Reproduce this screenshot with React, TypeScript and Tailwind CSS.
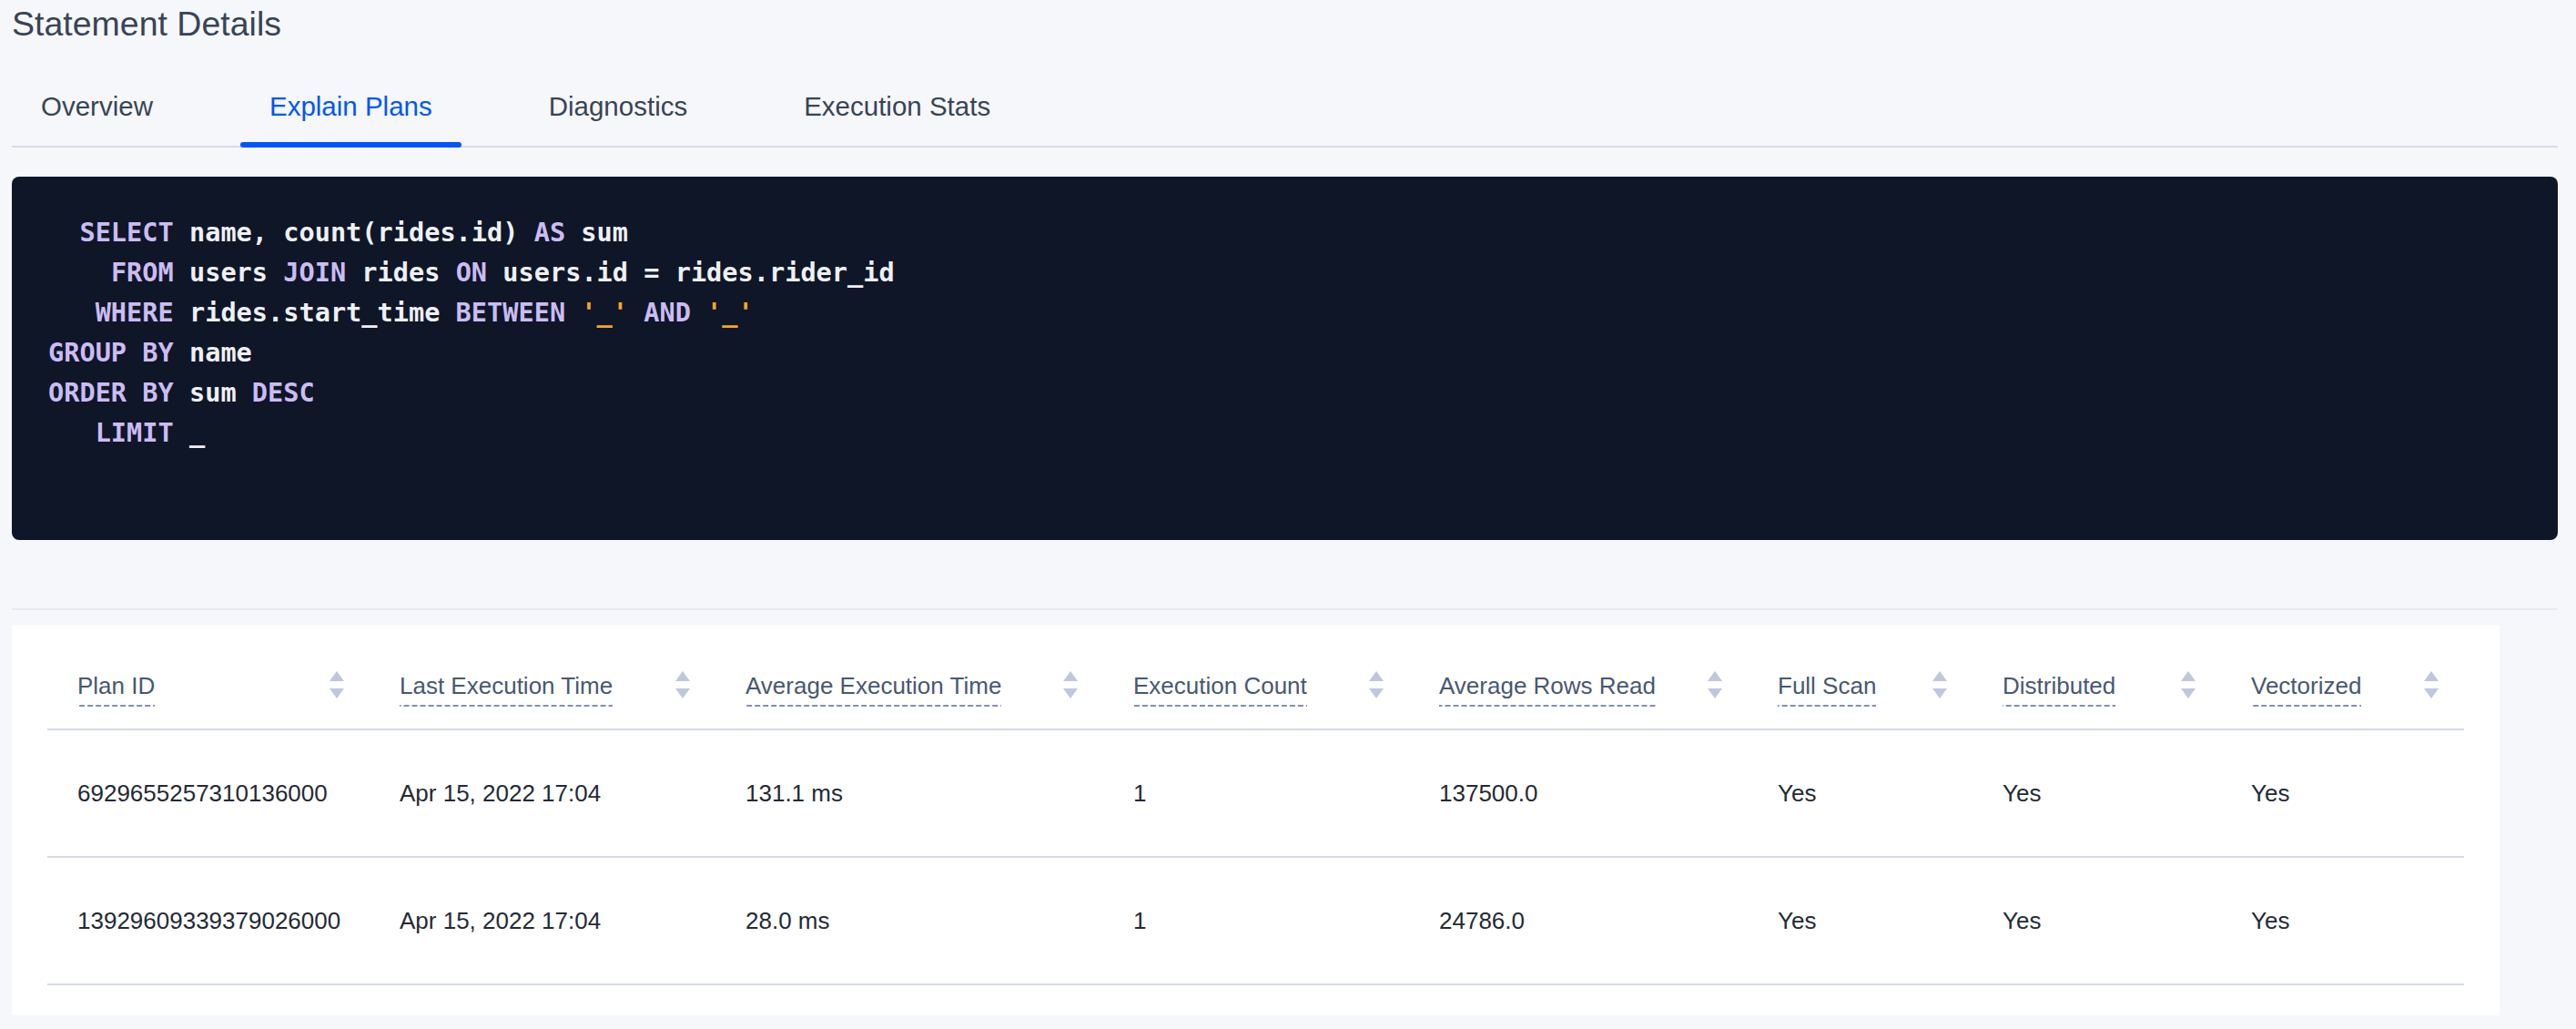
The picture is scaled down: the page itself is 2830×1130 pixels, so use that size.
import React from 'react';

const tabs = ['Overview', 'Explain Plans', 'Diagnostics', 'Execution Stats'];

const columns = [
  'Plan ID',
  'Last Execution Time',
  'Average Execution Time',
  'Execution Count',
  'Average Rows Read',
  'Full Scan',
  'Distributed',
  'Vectorized',
];

const rows = [
  ['6929655257310136000', 'Apr 15, 2022 17:04', '131.1 ms', '1', '137500.0', 'Yes', 'Yes', 'Yes'],
  ['13929609339379026000', 'Apr 15, 2022 17:04', '28.0 ms', '1', '24786.0', 'Yes', 'Yes', 'Yes'],
];

type Tok = { t: string; k?: 'kw' | 'str' };

// statement split into tokens so keywords and literals get their colours
const sql: Tok[][] = [
  [{ t: '  ' }, { t: 'SELECT', k: 'kw' }, { t: ' name, count(rides.id) ' }, { t: 'AS', k: 'kw' }, { t: ' sum' }],
  [
    { t: '    ' },
    { t: 'FROM', k: 'kw' },
    { t: ' users ' },
    { t: 'JOIN', k: 'kw' },
    { t: ' rides ' },
    { t: 'ON', k: 'kw' },
    { t: ' users.id = rides.rider_id' },
  ],
  [
    { t: '   ' },
    { t: 'WHERE', k: 'kw' },
    { t: ' rides.start_time ' },
    { t: 'BETWEEN', k: 'kw' },
    { t: ' ' },
    { t: "'_'", k: 'str' },
    { t: ' ' },
    { t: 'AND', k: 'kw' },
    { t: ' ' },
    { t: "'_'", k: 'str' },
  ],
  [{ t: 'GROUP BY', k: 'kw' }, { t: ' name' }],
  [{ t: 'ORDER BY', k: 'kw' }, { t: ' sum ' }, { t: 'DESC', k: 'kw' }],
  [{ t: '   ' }, { t: 'LIMIT', k: 'kw' }, { t: ' _' }],
];

function SortIcon() {
  return (
    <svg width="16" height="30" viewBox="0 0 16 30" className="mt-px shrink-0">
      <polygon points="8,0 16,11 0,11" fill="#c0c6dc" />
      <polygon points="0,19 16,19 8,30" fill="#c0c6dc" />
    </svg>
  );
}

const grid =
  'grid grid-cols-[354px_380px_426px_336px_372px_247px_273px_1fr]';

export default function App() {
  return (
    <div className="min-h-screen bg-[#f5f7fa] pl-[13px] pr-[20px] font-['Liberation_Sans',Arial,sans-serif]">
      <h1 className="text-[37.5px] leading-[52px] text-[#394455]">Statement Details</h1>

      <div className="flex gap-[64px] border-b-2 border-[#d6dbe7]">
        {tabs.map((tab, i) => (
          <div
            key={tab}
            className={`relative px-[32px] pt-[45px] pb-[23px] text-[29.5px] leading-[40px] ${
              i === 1 ? 'text-[#0055ff]' : 'text-[#394455]'
            }`}
          >
            {tab}
            {i === 1 && (
              <span className="absolute left-0 right-0 bottom-[-2px] h-[6px] rounded-full bg-[#0055ff]" />
            )}
          </div>
        ))}
      </div>

      <div className="mt-[32px] h-[399px] rounded-[8px] bg-[#0e1628] pl-[40px] pt-[39px]">
        <pre className="font-['DejaVu_Sans_Mono',monospace] text-[28.6px] leading-[44px] font-bold text-[#eef0f5]">
          {sql.map((line, i) => (
            <div key={i}>
              {line.map((tok, j) => (
                <span
                  key={j}
                  className={
                    tok.k === 'kw' ? 'text-[#cbbcf2]' : tok.k === 'str' ? 'text-[#f5a623]' : ''
                  }
                >
                  {tok.t}
                </span>
              ))}
            </div>
          ))}
        </pre>
      </div>

      <div className="mt-[75px] h-[2px] bg-[#e6eaf1]" />

      <div className="mt-[16px] mr-[64px] bg-white px-[39px] pt-[15px] pb-[33px]">
        <div className={`${grid} border-b-2 border-[#d6dbe7] h-[101px]`}>
          {columns.map(col => (
            <div key={col} className="flex items-start justify-between pl-[33px] pr-[28px] pt-[35px]">
              <span className="pb-[6px] text-[26px] leading-[34px] text-[#475872] bg-[linear-gradient(to_right,#8590ad_70%,transparent_0)] bg-[length:9px_2px] bg-repeat-x bg-bottom">
                {col}
              </span>
              <SortIcon />
            </div>
          ))}
        </div>

        {rows.map((row, r) => (
          <div key={r} className={`${grid} h-[140px] items-center border-b-2 border-[#d6dbe7]`}>
            {row.map((cell, c) => (
              <div key={c} className="pl-[33px] text-[26px] leading-[34px] text-[#242a35]">
                {cell}
              </div>
            ))}
          </div>
        ))}
      </div>
    </div>
  );
}
